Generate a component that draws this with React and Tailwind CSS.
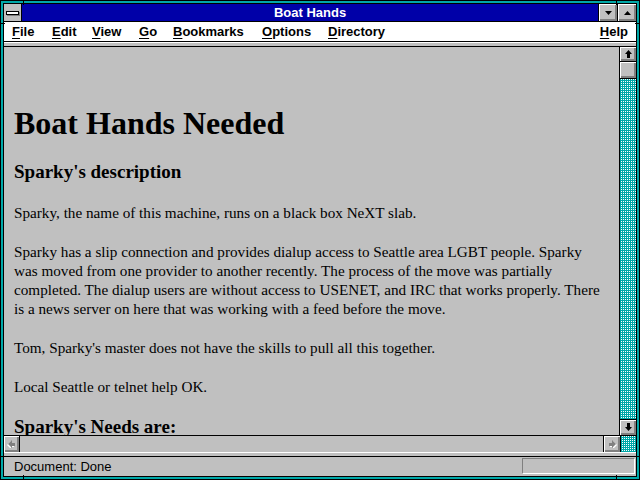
const raised =
  'bg-[#c0c0c0] shadow-[inset_1px_1px_0_#ffffff,inset_-1px_-1px_0_#808080,inset_-2px_-2px_0_#808080]';
const dither =
  'bg-[image:repeating-conic-gradient(#ffffff_0_25%,#00a8a8_0_100%)] bg-[length:2px_2px]';

const menus = [
  { label: 'File', w: 'w-[40px]' },
  { label: 'Edit', w: 'w-[40px]' },
  { label: 'View', w: 'w-[47px]' },
  { label: 'Go', w: 'w-[34px]' },
  { label: 'Bookmarks', w: 'w-[89px]' },
  { label: 'Options', w: 'w-[66px]' },
  { label: 'Directory', w: 'w-[80px]' },
];

function ArrowUp({ down }) {
  return (
    <svg width="7" height="8" viewBox="0 0 7 8" className={down ? 'rotate-180' : ''}>
      <polygon points="3.5,0 7,4 5,4 5,8 2,8 2,4 0,4" fill="#000" />
    </svg>
  );
}

function ArrowSide({ left }) {
  return (
    <svg width="9" height="8" viewBox="0 0 9 8" className={left ? '-scale-x-100' : ''}>
      <polygon points="1,3 4,3 4,0 8,4 4,8 4,6 1,6" fill="#ffffff" transform="translate(1,1)" />
      <polygon points="1,3 4,3 4,0 8,4 4,8 4,6 1,6" fill="#808080" />
    </svg>
  );
}

function Menu({ label }) {
  return (
    <span>
      <span className="underline underline-offset-2">{label[0]}</span>
      {label.slice(1)}
    </span>
  );
}

export default function App() {
  return (
    <div className="relative w-[640px] h-[480px] bg-[#00a8a8] border border-black p-[2px] font-['Liberation_Sans',Arial,sans-serif]">
      {/* frame corner marks */}
      <div className="absolute top-0 left-[22px] w-px h-[4px] bg-black" />
      <div className="absolute top-0 right-[22px] w-px h-[4px] bg-black" />
      <div className="absolute bottom-0 left-[22px] w-px h-[4px] bg-black" />
      <div className="absolute bottom-0 right-[22px] w-px h-[4px] bg-black" />
      <div className="absolute left-0 top-[22px] w-[4px] h-px bg-black" />
      <div className="absolute left-0 bottom-[22px] w-[4px] h-px bg-black" />
      <div className="absolute right-0 top-[22px] w-[4px] h-px bg-black" />
      <div className="absolute right-0 bottom-[22px] w-[4px] h-px bg-black" />

      <div className="flex flex-col h-full border border-black bg-[#c0c0c0]">
        {/* title bar */}
        <div className="flex h-[18px] border-b border-black">
          <div className="w-[18px] border-r border-black bg-[#c0c0c0] flex items-center justify-center">
            <div className="w-[13px] h-[4px] bg-white border border-black shadow-[1px_1px_0_#808080]" />
          </div>
          <div className="flex-1 bg-[#0000a8] text-white font-bold text-[13px] leading-[17px] text-center">
            Boat Hands
          </div>
          <div className={`w-[19px] border-l border-black flex items-center justify-center ${raised}`}>
            <svg width="7" height="4" viewBox="0 0 7 4">
              <polygon points="0,0 7,0 3.5,4" fill="#000" />
            </svg>
          </div>
          <div className={`w-[19px] border-l border-black flex items-center justify-center ${raised}`}>
            <svg width="7" height="4" viewBox="0 0 7 4">
              <polygon points="0,4 7,4 3.5,0" fill="#000" />
            </svg>
          </div>
        </div>

        {/* menu bar */}
        <div className="flex items-center h-[20px] bg-white border-b border-black pl-[8px] pr-[8px] text-[13px] font-bold text-black">
          {menus.map((m) => (
            <div key={m.label} className={m.w}>
              <Menu label={m.label} />
            </div>
          ))}
          <div className="ml-auto">
            <Menu label="Help" />
          </div>
        </div>

        {/* separator */}
        <div className="h-[5px] border-t border-white border-b border-b-black bg-[#c0c0c0]" />

        {/* content + vertical scrollbar */}
        <div className="flex h-[388px]">
          <div className="flex-1 overflow-hidden pl-[10px] text-black font-['Liberation_Serif','Times_New_Roman',serif]">
            <h1 className="mt-[58px] text-[32px] leading-[37px] font-bold">Boat Hands Needed</h1>
            <h2 className="mt-[19px] text-[19px] leading-[22px] font-bold">Sparky's description</h2>
            <p className="mt-[20px] text-[15.2px] leading-[19px]">
              Sparky, the name of this machine, runs on a black box NeXT slab.
            </p>
            <p className="mt-[20px] text-[15.2px] leading-[19px] whitespace-nowrap">
              Sparky has a slip connection and provides dialup access to Seattle area LGBT people. Sparky
              <br />
              was moved from one provider to another recently. The process of the move was partially
              <br />
              completed. The dialup users are without access to USENET, and IRC that works properly. There
              <br />
              is a news server on here that was working with a feed before the move.
            </p>
            <p className="mt-[20px] text-[15.2px] leading-[19px]">
              Tom, Sparky's master does not have the skills to pull all this together.
            </p>
            <p className="mt-[20px] text-[15.2px] leading-[19px]">Local Seattle or telnet help OK.</p>
            <h3 className="mt-[20px] text-[19px] leading-[22px] font-bold">Sparky's Needs are:</h3>
          </div>

          <div className="w-[17px] flex flex-col border-l border-black">
            <div className={`h-[15px] border-b border-black flex items-center justify-center ${raised}`}>
              <ArrowUp />
            </div>
            <div className={`h-[17px] border-b border-black ${raised}`} />
            <div className={`flex-1 ${dither}`} />
            <div className={`h-[16px] border-t border-black flex items-center justify-center ${raised}`}>
              <ArrowUp down />
            </div>
          </div>
        </div>

        {/* horizontal scrollbar */}
        <div className="flex h-[17px] border-t border-black">
          <div className={`w-[16px] border-r border-black flex items-center justify-center ${raised}`}>
            <ArrowSide left />
          </div>
          <div className="flex-1 bg-[#c0c0c0]" />
          <div className={`w-[17px] border-l border-black flex items-center justify-center ${raised}`}>
            <ArrowSide />
          </div>
          <div className={`w-[16px] border-l border-black ${dither}`} />
        </div>

        {/* separator */}
        <div className="h-[5px] border-t border-white border-b border-b-black bg-[#c0c0c0]" />

        {/* status bar */}
        <div className="flex items-center flex-1 pl-[10px] pr-[1px] text-[13px] text-black">
          <span>Document: Done</span>
          <div className="ml-auto w-[113px] h-[16px] border border-t-[#808080] border-l-[#808080] border-b-white border-r-white" />
        </div>
      </div>
    </div>
  );
}
